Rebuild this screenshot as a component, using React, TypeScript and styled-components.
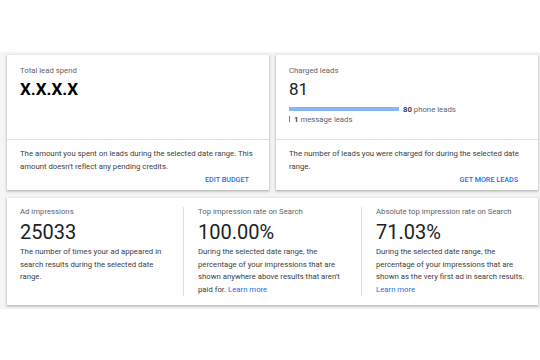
import React from 'react'
import styled, { createGlobalStyle } from 'styled-components'

const GlobalStyle = createGlobalStyle`
  body {
    margin: 0;
    background: #ffffff;
    font-family: Roboto, "Liberation Sans", Arial, sans-serif;
    -webkit-font-smoothing: antialiased;
  }
`

const Board = styled.div`
  margin-top: 52px;
  background: #f5f5f5;
  padding: 3px 2px 4px 7px;
`

const TopRow = styled.div`
  display: grid;
  grid-template-columns: 1fr 1fr;
  gap: 7px;
  margin-bottom: 8px;
`

const Card = styled.div`
  background: #ffffff;
  box-shadow: 0 1px 2px rgba(60, 64, 67, 0.3), 0 1px 3px 1px rgba(60, 64, 67, 0.12);
`

const CardTop = styled.div`
  height: 84px;
  box-sizing: border-box;
  padding: 11px 14px 0 13px;
`

const CardBottom = styled.div`
  height: 51px;
  box-sizing: border-box;
  border-top: 1px solid #e0e0e0;
  padding: 7px 12px 0 13px;
`

const Label = styled.div`
  font-size: 7.75px;
  line-height: 10px;
  color: #5f6368;
`

const Value = styled.div<{ $bold?: boolean; $big?: boolean }>`
  margin-top: 3px;
  font-size: ${p => (p.$big ? '20px' : '17px')};
  line-height: ${p => (p.$big ? '24px' : '20px')};
  font-weight: ${p => (p.$bold ? 700 : 400)};
  color: ${p => (p.$bold ? '#000000' : '#202124')};
`

const Desc = styled.p`
  margin: 0;
  font-size: 7.75px;
  line-height: 13px;
  color: #3c4043;
`

const ActionRow = styled.div`
  margin-top: 1px;
  padding-right: 8px;
  text-align: right;
  font-size: 7.2px;
  line-height: 12px;
`

const Action = styled.a`
  font-weight: 500;
  color: #1a73e8;
  text-decoration: none;
  text-transform: uppercase;
`

const BarRow = styled.div<{ $first?: boolean }>`
  display: flex;
  align-items: center;
  gap: 4px;
  margin-top: ${p => (p.$first ? '5px' : '0')};
  height: 10px;
  font-size: 7.75px;
`

const Bar = styled.div<{ $width: number; $thin?: boolean }>`
  width: ${p => p.$width}px;
  height: ${p => (p.$thin ? '6px' : '4px')};
  background: ${p => (p.$thin ? '#4285f4' : '#8ab4f8')};
`

const BarText = styled.span`
  color: #5f6368;

  b {
    color: #3c4043;
    font-weight: 700;
  }
`

const Metrics = styled(Card)`
  display: flex;
  padding: 9px 13px 9px 13px;
`

const Metric = styled.div`
  flex: 1 1 0;
  min-width: 0;
  min-height: 86px;
  padding: 0 14px;

  &:first-child {
    padding-left: 0;
  }
  &:last-child {
    padding-right: 0;
  }
  & + & {
    border-left: 1px solid #e0e0e0;
  }
`

const MetricDesc = styled(Desc)`
  margin-top: 2px;
  line-height: 12.5px;
`

const Link = styled.a`
  color: #1a73e8;
  text-decoration: none;
`

const metrics = [
  {
    label: 'Ad impressions',
    value: '25033',
    desc: 'The number of times your ad appeared in search results during the selected date range.',
    link: false,
  },
  {
    label: 'Top impression rate on Search',
    value: '100.00%',
    desc: "During the selected date range, the percentage of your impressions that are shown anywhere above results that aren't paid for.",
    link: true,
  },
  {
    label: 'Absolute top impression rate on Search',
    value: '71.03%',
    desc: 'During the selected date range, the percentage of your impressions that are shown as the very first ad in search results.',
    link: true,
  },
]

export default function App() {
  return (
    <>
      <GlobalStyle />
      <Board>
        <TopRow>
          <Card>
            <CardTop>
              <Label>Total lead spend</Label>
              <Value $bold>X.X.X.X</Value>
            </CardTop>
            <CardBottom>
              <Desc>
                The amount you spent on leads during the selected date range. This amount doesn't
                reflect any pending credits.
              </Desc>
              <ActionRow>
                <Action href="#">Edit budget</Action>
              </ActionRow>
            </CardBottom>
          </Card>
          <Card>
            <CardTop>
              <Label>Charged leads</Label>
              <Value>81</Value>
              <BarRow $first>
                <Bar $width={110} />
                <BarText>
                  <b>80</b> phone leads
                </BarText>
              </BarRow>
              <BarRow>
                <Bar $width={1} $thin />
                <BarText>
                  <b>1</b> message leads
                </BarText>
              </BarRow>
            </CardTop>
            <CardBottom>
              <Desc>The number of leads you were charged for during the selected date range.</Desc>
              <ActionRow>
                <Action href="#">Get more leads</Action>
              </ActionRow>
            </CardBottom>
          </Card>
        </TopRow>
        <Metrics>
          {metrics.map(m => (
            <Metric key={m.label}>
              <Label>{m.label}</Label>
              <Value $big>{m.value}</Value>
              <MetricDesc>
                {m.desc}
                {m.link && (
                  <>
                    {' '}
                    <Link href="#">Learn more</Link>
                  </>
                )}
              </MetricDesc>
            </Metric>
          ))}
        </Metrics>
      </Board>
    </>
  )
}
